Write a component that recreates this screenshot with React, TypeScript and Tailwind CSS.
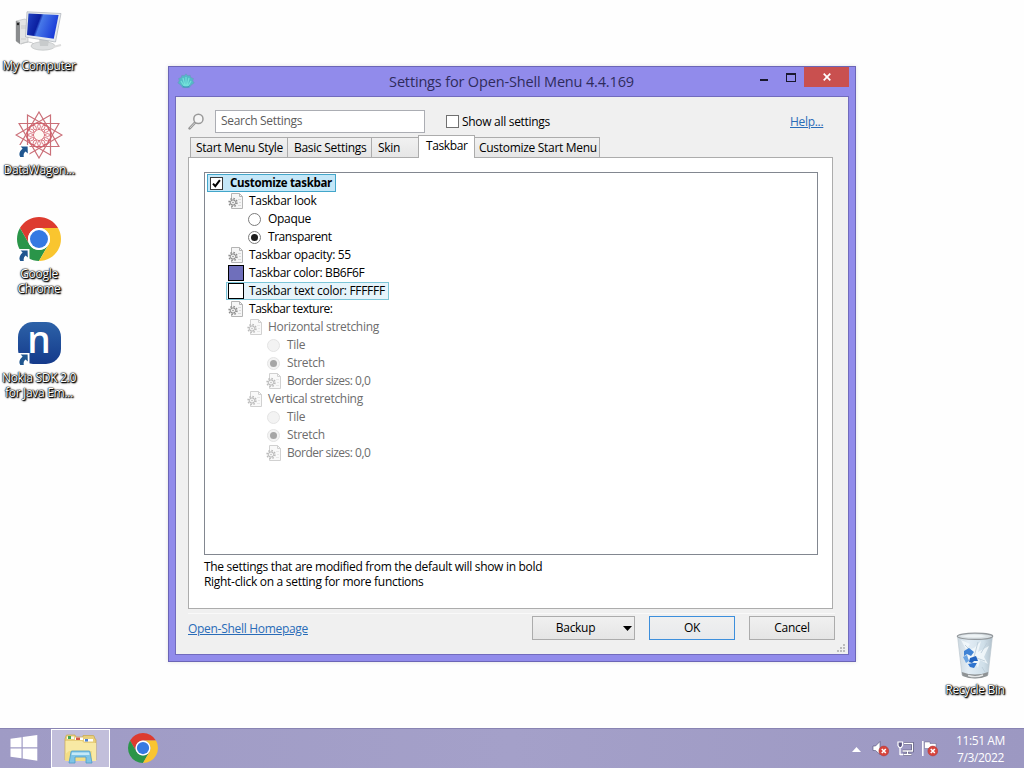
import React from "react";

const SHADOW =
  "text-white [text-shadow:0_0_1px_#000,0_0_1px_#000,1px_1px_1px_#000,1px_1px_2px_#000,0_0_2px_#222]";

function ChromeLogo({ className }: { className: string }) {
  return (
    <svg viewBox="0 0 48 48" className={className}>
      <path d="M24 12H44.78A24 24 0 0 0 3.22 12L13.61 30A12 12 0 0 1 24 12Z" fill="#dd3b2f" />
      <path d="M13.61 30L3.22 12A24 24 0 0 0 24 48L34.39 30A12 12 0 0 1 13.61 30Z" fill="#2a9549" />
      <path d="M34.39 30L24 48A24 24 0 0 0 44.78 12H24A12 12 0 0 1 34.39 30Z" fill="#f9c52f" />
      <circle cx="24" cy="24" r="12" fill="#fff" />
      <circle cx="24" cy="24" r="9.8" fill="#3579e2" />
    </svg>
  );
}

function ShortcutArrow() {
  return (
    <svg viewBox="0 0 13 13" className="absolute bottom-px left-0 h-[13px] w-[13px]">
      <rect width="12.5" height="13" fill="#fff" />
      <path d="M3.6 1.4L10.6 1.4L10.8 8.4L8.6 6.6Q6 8.6 6.8 12L3.2 12Q.8 8 5.6 3.6Z" fill="#20568f" />
    </svg>
  );
}

function ComputerIcon() {
  return (
    <svg viewBox="0 0 48 42" className="h-[42px] w-[48px]">
      <defs>
        <linearGradient id="screen" x1="0" y1="0" x2="1" y2="0.3">
          <stop offset="0" stopColor="#2344c4" />
          <stop offset="0.42" stopColor="#0a1fa0" />
          <stop offset="0.5" stopColor="#4778e8" />
          <stop offset="1" stopColor="#1b3dd8" />
        </linearGradient>
      </defs>
      <path d="M1 10L10 8L13 10V31L5 33L1 30Z" fill="#e3e4e4" stroke="#b5b7b8" strokeWidth=".6" />
      <path d="M1 10L5 11V33L1 30Z" fill="#8a8c8e" />
      <circle cx="3" cy="13" r="1.2" fill="#222" />
      <path d="M6 15H12M6 17H12M6 28H11" stroke="#bbb" strokeWidth=".6" />
      <path d="M6 33Q14 29 19 33" stroke="#c6c8c9" fill="none" />
      <ellipse cx="28" cy="35" rx="12" ry="4.2" fill="#dddfe0" stroke="#b7babb" strokeWidth=".6" />
      <path d="M24 27L34 29L33 35L25 35Z" fill="#c8cbcc" />
      <path d="M38 36L46 34" stroke="#ddd" strokeWidth="2" />
      <path d="M12 .8L46 2.5L40.5 31L10.5 26Z" fill="#e5e9ee" stroke="#aab0b8" strokeWidth=".7" />
      <path d="M13.5 2.4L43.6 4L38.8 27.7L12 24Z" fill="url(#screen)" />
    </svg>
  );
}

function AtomFlowerIcon() {
  const c = 24;
  const point = (i: number, r: number) => {
    const a = (i * Math.PI) / 6 - Math.PI / 2;
    return [c + r * Math.cos(a), c + r * Math.sin(a)];
  };
  const idx = Array.from({ length: 12 }, (_, i) => i);
  return (
    <svg viewBox="0 0 48 48" className="h-[48px] w-[48px]">
      <g fill="none" stroke="#d25a67">
        {[0, 1, 2, 3].map((i) => (
          <polygon key={i} points={[i, i + 4, i + 8].map((n) => point(n, 23).join(",")).join(" ")} strokeWidth="1.2" stroke="#cb6f78" />
        ))}
        {idx.map((i) => {
          const [x, y] = point(i + 0.5, 8.8);
          return <circle key={i} cx={x} cy={y} r="3.7" strokeWidth=".8" />;
        })}
      </g>
      <circle cx={c} cy={c} r="4.4" fill="#fff8f3" />
    </svg>
  );
}

function NokiaIcon() {
  return (
    <div className="flex h-[42px] w-[43px] items-center justify-center rounded-[15px] bg-linear-to-b from-[#2d62a8] to-[#153a8b] pb-[9px] font-['Open_Sans',sans-serif] text-[37px] leading-none font-semibold tracking-normal text-white">
      n
    </div>
  );
}

function RecycleBinIcon() {
  return (
    <svg viewBox="0 0 38 48" className="h-[48px] w-[38px]">
      <defs>
        <linearGradient id="bin" x1="0" x2="1">
          <stop offset="0" stopColor="#cbd7df" />
          <stop offset=".3" stopColor="#e3edf5" />
          <stop offset=".75" stopColor="#cfdfe9" />
          <stop offset="1" stopColor="#b2c1cc" />
        </linearGradient>
      </defs>
      <path d="M1.5 4L6 43Q19 49 32 43L36.5 4Z" fill="url(#bin)" stroke="#b9c4cc" strokeWidth=".6" />
      <path d="M5 8L14 12L9 19L18 16L25 9L22 20L33 14L28 25L32 32L24 28L22 36L16 26L8 29L12 21Z" fill="#f5fafd" opacity=".8" />
      <path d="M9 13L16 20M22 10L18 25L29 29M31 11L25 21M26 35L29 40" stroke="#bccdd9" strokeWidth=".9" fill="none" />
      <path d="M5.8 40Q19 45 32.2 40L31.5 44Q19 49 6.5 44Z" fill="#8f9395" />
      <path d="M12 43.5Q20 46 27 43" stroke="#e4e6e7" strokeWidth="1.4" fill="none" />
      <ellipse cx="19" cy="4.3" rx="17.7" ry="3.1" fill="#d9e0e4" stroke="#94999d" strokeWidth="1.2" />
      <path d="M4 4Q18 1 31 4Q19 7 4 4Z" fill="#eef3f5" />
      <path d="M8 19L13 16L18 20L15 24L11 22L8 24Z" fill="#3f83d5" />
      <path d="M7 25L11 23L13 29L10 31Z" fill="#6aa4e3" />
      <path d="M14 26L20 24L22 29L18 29L16 31L13 30Z" fill="#2163c0" />
      <path d="M12 32L17 31L21 31L18 36L14 35Z" fill="#2f74ce" />
    </svg>
  );
}

function DesktopIcon({ label, children, shortcut }: { label: React.ReactNode; children: React.ReactNode; shortcut?: boolean }) {
  return (
    <div className="flex h-[104px] w-[78px] flex-col items-center">
      <div className="relative flex h-[48px] w-[44px] shrink-0 items-center justify-center">
        {children}
        {shortcut && <ShortcutArrow />}
      </div>
      <div className={`mt-[3px] text-center leading-[15px] whitespace-nowrap ${SHADOW}`}>{label}</div>
    </div>
  );
}

function SettingIcon({ dim }: { dim?: boolean }) {
  return (
    <svg viewBox="0 0 16 16" className={dim ? "h-4 w-4 opacity-60" : "h-4 w-4"}>
      <path d="M3.5 .5H11.5L14.5 3.5V15.5H3.5Z" fill="#f6f6f6" stroke="#b4b4b4" />
      <path d="M11.5 .5V3.5H14.5" fill="none" stroke="#b4b4b4" />
      <path d="M10 6.5H13M11 9.5H13M10 12.5H13" stroke="#dadada" />
      <circle cx="5" cy="9.5" r="3.9" fill="#eee" stroke="#8d8d8d" strokeWidth="1.6" strokeDasharray="1.5 1.55" />
      <circle cx="5" cy="9.5" r="2.6" fill="#f4f4f4" stroke="#858585" strokeWidth="1" />
      <circle cx="5" cy="9.5" r=".8" fill="#909090" />
    </svg>
  );
}

function Radio({ on, dim }: { on?: boolean; dim?: boolean }) {
  return (
    <div
      className={`mr-px flex h-[13px] w-[13px] items-center justify-center rounded-full border ${
        dim ? "border-[#e4e4e4] bg-[#f3f3f3]" : "border-[#7c7c7c] bg-white"
      }`}
    >
      {on && <div className={`h-[7px] w-[7px] rounded-full ${dim ? "bg-[#a6a6a6]" : "bg-[#1c1c1c]"}`} />}
    </div>
  );
}

function Check() {
  return (
    <div className="mr-px flex h-[13px] w-[13px] items-center justify-center border border-[#3a3a3a] bg-white">
      <svg viewBox="0 0 11 11" className="h-[11px] w-[11px]">
        <path d="M2 5.6L4.3 8.2L8.9 2.2" fill="none" stroke="#000" strokeWidth="2" />
      </svg>
    </div>
  );
}

type Kind = "check" | "group" | "off" | "on" | "purple" | "white";
type Row = { level: string; kind: Kind; text: string; dim?: boolean; box?: string; font?: string };

const rows: Row[] = [
  { level: "pl-[1px]", kind: "check", text: "Customize taskbar", box: "border-[#43a6ca] bg-[#c4e7f8]", font: "font-bold text-[11.5px] tracking-[-0.3px]" },
  { level: "pl-[20px]", kind: "group", text: "Taskbar look" },
  { level: "pl-[39px]", kind: "off", text: "Opaque" },
  { level: "pl-[39px]", kind: "on", text: "Transparent", font: "tracking-[-0.45px]" },
  { level: "pl-[20px]", kind: "group", text: "Taskbar opacity: 55" },
  { level: "pl-[20px]", kind: "purple", text: "Taskbar color: BB6F6F", font: "tracking-[-0.38px]" },
  { level: "pl-[20px]", kind: "white", text: "Taskbar text color: FFFFFF", box: "border-[#7cc5d8] bg-[#e6f4fb]" },
  { level: "pl-[20px]", kind: "group", text: "Taskbar texture:", font: "tracking-[-0.47px]" },
  { level: "pl-[39px]", kind: "group", text: "Horizontal stretching", dim: true },
  { level: "pl-[58px]", kind: "off", text: "Tile", dim: true },
  { level: "pl-[58px]", kind: "on", text: "Stretch", dim: true },
  { level: "pl-[58px]", kind: "group", text: "Border sizes: 0,0", dim: true, font: "tracking-[-0.5px]" },
  { level: "pl-[39px]", kind: "group", text: "Vertical stretching", dim: true },
  { level: "pl-[58px]", kind: "off", text: "Tile", dim: true },
  { level: "pl-[58px]", kind: "on", text: "Stretch", dim: true },
  { level: "pl-[58px]", kind: "group", text: "Border sizes: 0,0", dim: true, font: "tracking-[-0.5px]" },
];

function RowIcon({ kind, dim }: { kind: Kind; dim?: boolean }) {
  if (kind === "check") return <Check />;
  if (kind === "group") return <SettingIcon dim={dim} />;
  if (kind === "off" || kind === "on") return <Radio on={kind === "on"} dim={dim} />;
  return <div className={`h-4 w-4 border border-black ${kind === "purple" ? "bg-[#6f6fbb]" : "bg-white"}`} />;
}

function Tree() {
  return (
    <div className="h-[383px] w-[614px] border border-[#828790] bg-white pt-px pl-px">
      {rows.map((r, i) => (
        <div key={i} className={`flex h-[18px] ${r.level}`}>
          <div className={`flex h-[18px] items-center border pr-[3px] ${r.box ?? "border-transparent"}`}>
            <div className="flex w-[18px] items-center justify-center">
              <RowIcon kind={r.kind} dim={r.dim} />
            </div>
            <span className={`pl-[4px] leading-4 whitespace-nowrap ${r.dim ? "text-[#6d6d6d]" : ""} ${r.font ?? ""}`}>{r.text}</span>
          </div>
        </div>
      ))}
    </div>
  );
}

function Tab({ className, children }: { className: string; children: React.ReactNode }) {
  return (
    <div
      className={`h-[21px] border border-[#acacac] bg-linear-to-b from-[#f1f1f1] to-[#e6e6e6] leading-[20px] whitespace-nowrap ${className}`}
    >
      {children}
    </div>
  );
}

function Window() {
  return (
    <div className="absolute top-[66px] left-[168px] flex h-[596px] w-[688px] flex-col border border-[#6b65b6] bg-[#918beb] px-[6px] pb-[6px] shadow-[0_0_4px_rgba(0,0,0,0.12)]">
      <div className="relative flex h-[29px] shrink-0 items-center justify-center">
        <svg viewBox="0 0 18 16" className="absolute top-[6px] left-[2px] h-[16px] w-[18px]">
          <path d="M9 .8L10.8 2.8L13.2 2.2L13.8 4.6L16.4 5.4L15.8 7.8L17.2 10L14 12.2L12.5 14.6H5.5L4 12.2L.8 10L2.2 7.8L1.6 5.4L4.2 4.6L4.8 2.2L7.2 2.8Z" fill="#54b9c8" stroke="#6f91bb" strokeWidth=".5" />
          <path d="M9 4V13M6 5L8 13M12 5L10 13M4 8L7 13M14 8L11 13" stroke="#72e0d8" strokeWidth="1.3" />
          <path d="M5 12Q9 16 13 12L11.5 14.6H6.5Z" fill="#3c8fba" />
        </svg>
        <div className="-ml-px text-[14.5px] leading-[20px] tracking-[-0.16px] text-[#2f2b5c]">Settings for Open-Shell Menu 4.4.169</div>
        <div className="absolute top-0 right-0 flex h-[20px] items-start">
          <div className="mt-[12px] mr-[18px] h-[2px] w-[8px] bg-[#19172e]" />
          <div className="mt-[6px] mr-[8px] h-[9px] w-[10px] border border-t-2 border-[#19172e]" />
          <div className="flex h-[20px] w-[45px] items-center justify-center bg-[#c9504f]">
            <svg viewBox="0 0 8 8" className="h-[8px] w-[8px]">
              <path d="M.7 .7L7.3 7.3M7.3 .7L.7 7.3" stroke="#fff" strokeWidth="1.7" />
            </svg>
          </div>
        </div>
      </div>

      <div className="flex grow flex-col border border-[#716bbd] bg-[#f0f0f0] pl-[12px]">
        <div className="flex h-[38px] items-start pt-[13px]">
          <svg viewBox="0 0 17 17" className="mt-[3px] h-[17px] w-[17px]">
            <path d="M6.8 9.8L1.6 15.4" stroke="#969696" strokeWidth="2.6" strokeLinecap="round" />
            <path d="M6.8 9.8L2 15" stroke="#cfcfcf" strokeWidth="1" />
            <circle cx="10.4" cy="5.9" r="4.6" fill="#f6f6f6" stroke="#999" strokeWidth="1.5" />
          </svg>
          <div className="ml-[10px] h-[23px] w-[210px] border border-[#abadb3] bg-white pl-[5px] leading-[20px] text-[#5c5c5c]">
            Search Settings
          </div>
          <div className="mt-[5px] ml-[21px] h-[13px] w-[13px] border border-[#707070] bg-white" />
          <div className="mt-[2px] ml-[3px] w-[328px] leading-[20px]">Show all settings</div>
          <div className="mt-[2px] leading-[20px] text-[#2a6cb8] underline">Help...</div>
        </div>

        <div className="relative z-10 -mb-px flex h-[23px] items-end pl-[2px]">
          <Tab className="w-[98px] pl-[5px]">Start Menu Style</Tab>
          <Tab className="w-[84px] border-l-0 pl-[6px]">Basic Settings</Tab>
          <Tab className="w-[46px] border-x-0 pl-[6px]">Skin</Tab>
          <div className="h-[23px] w-[57px] border border-b-0 border-[#acacac] bg-white pl-[7px] leading-[20px] tracking-[-0.4px]">
            Taskbar
          </div>
          <Tab className="w-[125px] border-l-0 pl-[4px]">Customize Start Menu</Tab>
        </div>

        <div className="h-[452px] w-[645px] border border-[#acacac] bg-white pt-[14px] pl-[15px]">
          <Tree />
          <div className="mt-[4px] leading-[15px]">
            <div>The settings that are modified from the default will show in bold</div>
            <div>Right-click on a setting for more functions</div>
          </div>
        </div>

        <div className="mt-[4px] flex w-[647px] border-t border-[#f9f9f9] pt-[2px]">
          <div className="mt-[3px] -mb-px w-[344px] leading-[20px] text-[#2a6cb8] underline">Open-Shell Homepage</div>
          <div className="flex h-[24px] w-[103px] items-center border border-[#acacac] bg-linear-to-b from-[#f0f0f0] to-[#e5e5e5] pb-px">
            <span className="w-[85px] text-center">Backup</span>
            <svg viewBox="0 0 9 5" className="mt-[2px] ml-[5px] h-[5px] w-[9px]">
              <path d="M0 0H9L4.5 5Z" />
            </svg>
          </div>
          <div className="ml-[14px] flex h-[24px] w-[86px] items-center justify-center border border-[#3d8fdc] bg-linear-to-b from-[#f0f0f0] to-[#e7e9ec] pb-px">
            OK
          </div>
          <div className="ml-[14px] flex h-[24px] w-[86px] items-center justify-center border border-[#acacac] bg-linear-to-b from-[#f0f0f0] to-[#e5e5e5] pb-px">
            Cancel
          </div>
        </div>
        <svg viewBox="0 0 8 8" className="mt-[4px] ml-[649px] h-[8px] w-[8px] shrink-0 fill-[#bcbcbc]">
          <path d="M6 0h2v2h-2zM3 3h2v2h-2zM6 3h2v2h-2zM0 6h2v2h-2zM3 6h2v2h-2zM6 6h2v2h-2z" />
        </svg>
      </div>
    </div>
  );
}

function ErrorBadge() {
  return (
    <g>
      <circle cx="11.8" cy="11" r="4.9" fill="#d8453c" stroke="#b03a3f" strokeWidth=".6" />
      <path d="M9.8 9L13.8 13M13.8 9L9.8 13" stroke="#fff" strokeWidth="1.6" />
    </g>
  );
}

function Taskbar() {
  return (
    <div className="flex h-[40px] shrink-0 border-t border-[#8984b3] bg-linear-to-r from-[#9f9bc5] via-[#a4a0c9] to-[#9c98c2] text-white">
      <div className="flex w-[51px] items-start pt-[6px] pl-[10px]">
        <svg viewBox="0 0 28 26" className="h-[26px] w-[28px] fill-white">
          <path d="M.5 3.8L11.5 2.3V12.2H.5ZM12.7 2.1L27.3 0V12.2H12.7ZM.5 13.4H11.5V23.3L.5 21.8ZM12.7 13.4H27.3V25.8L12.7 23.6Z" />
        </svg>
      </div>
      <div className="flex h-[39px] w-[59px] items-center justify-center border border-white bg-[#c2bfdb]">
        <svg viewBox="0 0 34 30" className="mt-px h-[30px] w-[34px]">
          <path d="M1 5V26H32V6Q32 5 31 5L30 2Q30 1.5 29 1.5H19V3H12L11 1H3Q2 1 2 2Z" fill="#e8cf7c" stroke="#c9a84b" strokeWidth=".7" />
          <path d="M3 2.5H10V5H3Z" fill="#f7f7f0" />
          <path d="M4 2H7V5H4Z" fill="#42a653" />
          <path d="M11 3.5H19V6H11Z" fill="#fff" />
          <path d="M12 3.5H16V6H12Z" fill="#d55747" />
          <path d="M20 5H29V7.5H20Z" fill="#fff" />
          <path d="M21 5H24V7.5H21Z" fill="#4b7fd0" />
          <path d="M1.5 7H18L20 9H32V27H1.5Z" fill="#f8e9a4" />
          <path d="M5 17H28V27H1.5V20Z" fill="#f3dd85" />
          <path d="M7 18Q7 17 8 17H25Q26 17 26 18L28 29H22V23H11V29H5Z" fill="#7ec4e6" stroke="#4c9cc9" strokeWidth=".8" />
          <path d="M8 18.5H25L25.5 21H7.5Z" fill="#c5e9f7" />
        </svg>
      </div>
      <div className="flex w-[66px] items-start justify-center pt-[4px]">
        <ChromeLogo className="h-[30px] w-[30px]" />
      </div>
      <div className="grow" />
      <div className="flex h-[39px] items-center">
        <svg viewBox="0 0 9 5" className="mt-[2px] h-[5px] w-[9px] fill-white">
          <path d="M4.5 0L9 5H0Z" />
        </svg>
        <svg viewBox="0 0 17 17" className="ml-[11px] h-[17px] w-[17px]">
          <path d="M1 6H3.5L8 1.5V14.5L3.5 10.5H1Z" fill="#fff" stroke="#4f4b72" strokeWidth=".6" />
          <ErrorBadge />
        </svg>
        <svg viewBox="0 0 17 17" className="ml-[8px] h-[17px] w-[17px]" fill="none">
          <path d="M7 3.5H15.5V11H5.5M10.5 11V14M6.5 14.5H14.5" stroke="#4f4b72" strokeWidth="2.6" />
          <path d="M7 3.5H15.5V11H5.5M10.5 11V14M6.5 14.5H14.5M3 7.5V15M3 14.5H6" stroke="#fff" strokeWidth="1.3" />
          <path d="M1 2H5.5V5.5L4.3 7.5H2.3L1 5.5Z" stroke="#fff" strokeWidth="1.2" fill="#5e5a86" />
        </svg>
        <svg viewBox="0 0 17 17" className="ml-[7px] h-[17px] w-[17px]">
          <path d="M1.8 1V16" stroke="#fff" strokeWidth="1.5" />
          <path d="M3.5 2H9V3.5H15V9.5H8V8.5H3.5Z" fill="#fff" stroke="#4f4b72" strokeWidth=".4" />
          <ErrorBadge />
        </svg>
      </div>
      <div className="mr-px w-[85px] pt-[3px] text-center leading-[17px] tracking-[-0.4px]">
        <div>11:51 AM</div>
        <div>7/3/2022</div>
      </div>
    </div>
  );
}

export default function App() {
  return (
    <div className="relative flex h-[768px] w-[1024px] flex-col overflow-hidden bg-[#fefefe] font-['Open_Sans','Noto_Sans',sans-serif] text-[12px] tracking-[-0.3px] text-black">
      <div className="flex grow flex-col pt-[7px]">
        <DesktopIcon label="My Computer">
          <div className="mt-[2px] shrink-0">
            <ComputerIcon />
          </div>
        </DesktopIcon>
        <DesktopIcon label="DataWagon..." shortcut>
          <div className="shrink-0">
            <AtomFlowerIcon />
          </div>
        </DesktopIcon>
        <DesktopIcon label={<>Google<br />Chrome</>} shortcut>
          <ChromeLogo className="h-[44px] w-[44px]" />
        </DesktopIcon>
        <DesktopIcon label={<>Nokia SDK 2.0<br />for Java Em...</>} shortcut>
          <NokiaIcon />
        </DesktopIcon>
      </div>
      <div className="absolute top-[631px] left-[936px]">
        <DesktopIcon label="Recycle Bin">
          <div className="mt-[2px] shrink-0">
            <RecycleBinIcon />
          </div>
        </DesktopIcon>
      </div>
      <Window />
      <Taskbar />
    </div>
  );
}
